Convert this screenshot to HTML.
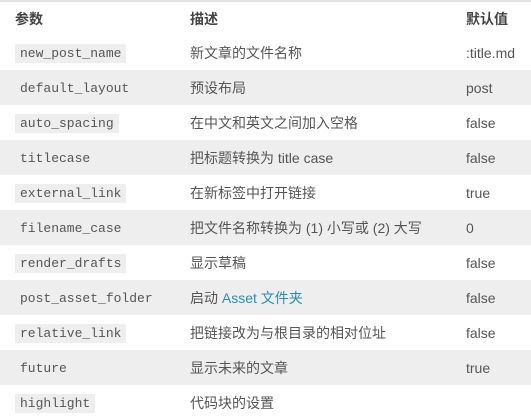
<!DOCTYPE html><html><head><meta charset="utf-8"><style>
body{margin:0;width:531px;height:420px;overflow:hidden;background:#fff;font-family:"Liberation Sans","Noto Sans CJK SC",sans-serif;font-size:14px;color:#555;}
table{border-collapse:collapse;width:531px;border-top:2px solid #e3e3e3;}
td,th{height:35px;padding:0;text-align:left;vertical-align:middle;}
th{height:33px;color:#444;font-weight:bold;}
td:first-child,th:first-child{padding-left:15px;width:175px}
td:nth-child(2),th:nth-child(2){width:276px}
tr:nth-child(odd) td{background:#eee}
code{font-family:"Liberation Mono",monospace;font-size:13px;background:#eee;padding:2px 5px;color:#555}
a{color:#258fb8;text-decoration:none}
</style></head><body><table>
<tr><th>参数</th><th>描述</th><th>默认值</th></tr>
<tr><td><code>new_post_name</code></td><td>新文章的文件名称</td><td>:title.md</td></tr>
<tr><td><code>default_layout</code></td><td>预设布局</td><td>post</td></tr>
<tr><td><code>auto_spacing</code></td><td>在中文和英文之间加入空格</td><td>false</td></tr>
<tr><td><code>titlecase</code></td><td>把标题转换为 title case</td><td>false</td></tr>
<tr><td><code>external_link</code></td><td>在新标签中打开链接</td><td>true</td></tr>
<tr><td><code>filename_case</code></td><td>把文件名称转换为 (1) 小写或 (2) 大写</td><td>0</td></tr>
<tr><td><code>render_drafts</code></td><td>显示草稿</td><td>false</td></tr>
<tr><td><code>post_asset_folder</code></td><td>启动 <a>Asset 文件夹</a></td><td>false</td></tr>
<tr><td><code>relative_link</code></td><td>把链接改为与根目录的相对位址</td><td>false</td></tr>
<tr><td><code>future</code></td><td>显示未来的文章</td><td>true</td></tr>
<tr><td><code>highlight</code></td><td>代码块的设置</td><td></td></tr>
</table></body></html>
